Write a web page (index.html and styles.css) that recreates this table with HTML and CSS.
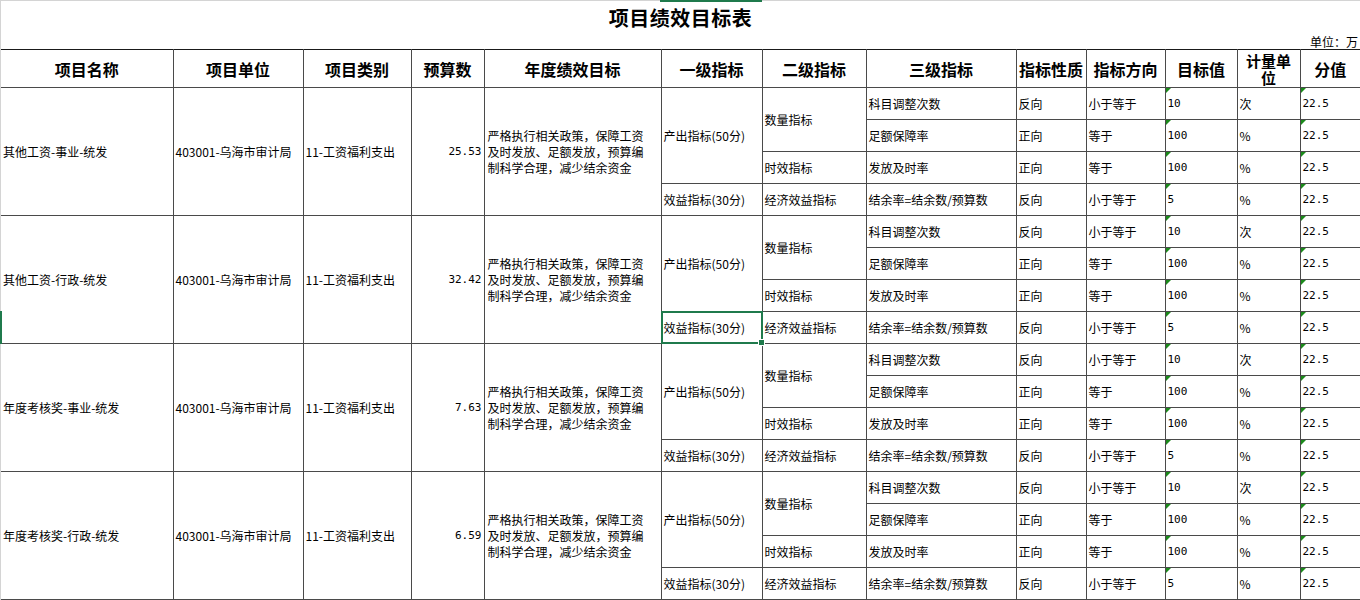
FILE: index.html
```html
<!DOCTYPE html>
<html lang="zh">
<head>
<meta charset="utf-8">
<title>项目绩效目标表</title>
<link rel="stylesheet" href="styles.css">
</head>
<body>
<div class="sheet">
  <div class="col-mark"></div>
  <div class="row-mark"></div>
  <div class="title">项目绩效目标表</div>
  <div class="unit">单位：万</div>
  <table class="grid">
    <colgroup>
      <col class="w1"><col class="w2"><col class="w3"><col class="w4"><col class="w5"><col class="w6"><col class="w7"><col class="w8"><col class="w9"><col class="w10"><col class="w11"><col class="w12"><col class="w13">
    </colgroup>
    <thead>
      <tr class="head">
        <th class="first">项目名称</th><th>项目单位</th><th>项目类别</th><th>预算数</th><th>年度绩效目标</th><th>一级指标</th><th>二级指标</th><th>三级指标</th><th>指标性质</th><th>指标方向</th><th>目标值</th><th class="wrap">计量单<br>位</th><th>分值</th>
      </tr>
    </thead>
    <tbody>
      <tr>
        <td rowspan="4" class="first">其他工资-事业-统发</td>
        <td rowspan="4">403001-乌海市审计局</td>
        <td rowspan="4">11-工资福利支出</td>
        <td rowspan="4" class="num">25.53</td>
        <td rowspan="4" class="goal">严格执行相关政策，保障工资<br>及时发放、足额发放，预算编<br>制科学合理，减少结余资金</td>
        <td rowspan="3">产出指标(50分)</td>
        <td rowspan="2">数量指标</td>
        <td>科目调整次数</td><td>反向</td><td>小于等于</td><td class="flag">10</td><td>次</td><td class="flag">22.5</td>
      </tr>
      <tr><td>足额保障率</td><td>正向</td><td>等于</td><td class="flag">100</td><td>%</td><td class="flag">22.5</td></tr>
      <tr><td>时效指标</td><td>发放及时率</td><td>正向</td><td>等于</td><td class="flag">100</td><td>%</td><td class="flag">22.5</td></tr>
      <tr><td>效益指标(30分)</td><td>经济效益指标</td><td>结余率=结余数/预算数</td><td>反向</td><td>小于等于</td><td class="flag">5</td><td>%</td><td class="flag">22.5</td></tr>

      <tr>
        <td rowspan="4" class="first">其他工资-行政-统发</td>
        <td rowspan="4">403001-乌海市审计局</td>
        <td rowspan="4">11-工资福利支出</td>
        <td rowspan="4" class="num">32.42</td>
        <td rowspan="4" class="goal">严格执行相关政策，保障工资<br>及时发放、足额发放，预算编<br>制科学合理，减少结余资金</td>
        <td rowspan="3">产出指标(50分)</td>
        <td rowspan="2">数量指标</td>
        <td>科目调整次数</td><td>反向</td><td>小于等于</td><td class="flag">10</td><td>次</td><td class="flag">22.5</td>
      </tr>
      <tr><td>足额保障率</td><td>正向</td><td>等于</td><td class="flag">100</td><td>%</td><td class="flag">22.5</td></tr>
      <tr><td>时效指标</td><td>发放及时率</td><td>正向</td><td>等于</td><td class="flag">100</td><td>%</td><td class="flag">22.5</td></tr>
      <tr><td class="selected">效益指标(30分)<span class="handle"></span></td><td>经济效益指标</td><td>结余率=结余数/预算数</td><td>反向</td><td>小于等于</td><td class="flag">5</td><td>%</td><td class="flag">22.5</td></tr>

      <tr>
        <td rowspan="4" class="first">年度考核奖-事业-统发</td>
        <td rowspan="4">403001-乌海市审计局</td>
        <td rowspan="4">11-工资福利支出</td>
        <td rowspan="4" class="num">7.63</td>
        <td rowspan="4" class="goal">严格执行相关政策，保障工资<br>及时发放、足额发放，预算编<br>制科学合理，减少结余资金</td>
        <td rowspan="3">产出指标(50分)</td>
        <td rowspan="2">数量指标</td>
        <td>科目调整次数</td><td>反向</td><td>小于等于</td><td class="flag">10</td><td>次</td><td class="flag">22.5</td>
      </tr>
      <tr><td>足额保障率</td><td>正向</td><td>等于</td><td class="flag">100</td><td>%</td><td class="flag">22.5</td></tr>
      <tr><td>时效指标</td><td>发放及时率</td><td>正向</td><td>等于</td><td class="flag">100</td><td>%</td><td class="flag">22.5</td></tr>
      <tr><td>效益指标(30分)</td><td>经济效益指标</td><td>结余率=结余数/预算数</td><td>反向</td><td>小于等于</td><td class="flag">5</td><td>%</td><td class="flag">22.5</td></tr>

      <tr>
        <td rowspan="4" class="first">年度考核奖-行政-统发</td>
        <td rowspan="4">403001-乌海市审计局</td>
        <td rowspan="4">11-工资福利支出</td>
        <td rowspan="4" class="num">6.59</td>
        <td rowspan="4" class="goal">严格执行相关政策，保障工资<br>及时发放、足额发放，预算编<br>制科学合理，减少结余资金</td>
        <td rowspan="3">产出指标(50分)</td>
        <td rowspan="2">数量指标</td>
        <td>科目调整次数</td><td>反向</td><td>小于等于</td><td class="flag">10</td><td>次</td><td class="flag">22.5</td>
      </tr>
      <tr><td>足额保障率</td><td>正向</td><td>等于</td><td class="flag">100</td><td>%</td><td class="flag">22.5</td></tr>
      <tr><td>时效指标</td><td>发放及时率</td><td>正向</td><td>等于</td><td class="flag">100</td><td>%</td><td class="flag">22.5</td></tr>
      <tr><td>效益指标(30分)</td><td>经济效益指标</td><td>结余率=结余数/预算数</td><td>反向</td><td>小于等于</td><td class="flag">5</td><td>%</td><td class="flag">22.5</td></tr>
    </tbody>
  </table>
</div>
</body>
</html>
```
FILE: styles.css
```css
html, body {
  margin: 0;
  padding: 0;
  background: #ffffff;
}
body {
  font-family: "Noto Sans CJK SC", "Noto Sans", sans-serif;
  color: #000;
  width: 1360px;
  height: 600px;
  overflow: hidden;
}
.sheet {
  position: relative;
  border-top: 1px solid #d4d4d4;
  border-left: 1px solid #d4d4d4;
  width: 1359px;
}
.col-mark {
  position: absolute;
  top: -1px;
  left: 659px;
  width: 102px;
  height: 2px;
  background: #1f7a4c;
}
.row-mark {
  position: absolute;
  left: -1px;
  top: 310px;
  width: 2px;
  height: 33px;
  background: #1f7a4c;
}
.title {
  height: 34px;
  line-height: 34px;
  text-align: center;
  font-size: 20px;
  font-weight: 700;
  letter-spacing: 0.5px;
}
.unit {
  height: 14px;
  line-height: 14px;
  font-size: 12px;
  text-align: right;
  padding-right: 2px;
}
.grid {
  border-collapse: collapse;
  table-layout: fixed;
  width: 1359px;
  font-size: 12px;
}
.w1 { width: 172px; }
.w2 { width: 130px; }
.w3 { width: 108px; }
.w4 { width: 73px; }
.w5 { width: 177px; }
.w6 { width: 101px; }
.w7 { width: 104px; }
.w8 { width: 150px; }
.w9 { width: 70px; }
.w10 { width: 79px; }
.w11 { width: 72px; }
.w12 { width: 63px; }
.w13 { width: 60px; }

.grid th,
.grid td {
  border: 1px solid #4a4a4a;
  padding: 0 2px;
  overflow: hidden;
  white-space: nowrap;
  vertical-align: middle;
  text-align: left;
  position: relative;
}
.grid th.first,
.grid td.first {
  border-left: none;
}
.grid th:last-child,
.grid td:last-child {
  border-right: none;
}
.grid th {
  border-top-color: #1a1a1a;
  height: 37px;
  font-size: 16px;
  font-weight: 700;
  text-align: center;
  line-height: 18px;
  padding: 0;
}
.grid th.wrap {
  font-size: 15px;
  line-height: 17px;
}
.grid td {
  height: 31px;
  line-height: 16px;
}
.grid td.num {
  text-align: right;
  font-family: "DejaVu Sans Mono", monospace;
  font-size: 11px;
}
.grid td.goal {
  padding-left: 3px;
}
.grid td.flag {
  font-family: "DejaVu Sans Mono", monospace;
  font-size: 11px;
}
.grid td.flag::before {
  content: "";
  position: absolute;
  top: 0;
  left: 0;
  border-top: 5px solid #1b8a1b;
  border-right: 5px solid transparent;
}
.grid td.selected {
  overflow: visible;
}
.grid td.selected::after {
  content: "";
  position: absolute;
  top: -1px;
  left: -1px;
  right: -1px;
  bottom: -1px;
  border: 2px solid #1f7a4c;
  z-index: 1;
}
.handle {
  position: absolute;
  right: -3px;
  bottom: -3px;
  width: 5px;
  height: 5px;
  background: #1f7a4c;
  border: 1px solid #fff;
  z-index: 2;
}
```
